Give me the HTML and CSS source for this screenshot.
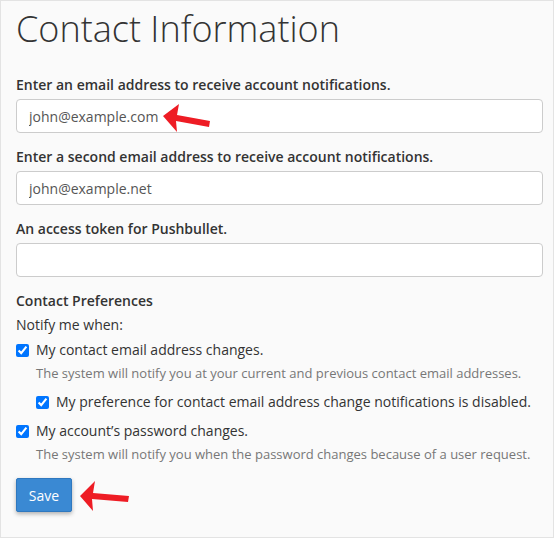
FILE: index.html
```html
<!DOCTYPE html>
<html>
<head>
<meta charset="utf-8">
<link rel="stylesheet" href="styles.css">
</head>
<body>
<div class="page">
  <h1 class="title">Contact Information</h1>
  <form class="form">
    <div class="group">
      <label class="label">Enter an email address to receive account notifications.</label>
      <div class="field-wrap">
        <input class="input" type="text" value="john@example.com">
        <svg class="arrow arrow-input" width="52" height="32" viewBox="0 0 52 32"><polygon points="2,13 18,1 16,12 49,18 48,24 15,18 16,29" fill="#ee1c24"/></svg>
      </div>
    </div>
    <div class="group">
      <label class="label">Enter a second email address to receive account notifications.</label>
      <input class="input" type="text" value="john@example.net">
    </div>
    <div class="group">
      <label class="label">An access token for Pushbullet.</label>
      <input class="input" type="text" value="">
    </div>
    <div class="prefs">
      <div class="label prefs-title">Contact Preferences</div>
      <div class="notify">Notify me when:</div>
      <label class="check"><input type="checkbox" checked><span>My contact email address changes.</span></label>
      <div class="help">The system will notify you at your current and previous contact email addresses.</div>
      <label class="check nested"><input type="checkbox" checked><span>My preference for contact email address change notifications is disabled.</span></label>
      <label class="check"><input type="checkbox" checked><span>My account’s password changes.</span></label>
      <div class="help">The system will notify you when the password changes because of a user request.</div>
    </div>
    <div class="actions">
      <button class="btn" type="button">Save</button>
      <svg class="arrow arrow-btn" width="54" height="36" viewBox="0 0 54 36"><polygon points="2,17 17,2 15,14 51,17 50,23 14,20 15,32" fill="#ee1c24"/></svg>
    </div>
  </form>
</div>
</body>
</html>
```
FILE: styles.css
```css
* { box-sizing: border-box; }
html, body { margin: 0; padding: 0; }
body {
  font-family: "Open Sans", "DejaVu Sans", sans-serif;
  color: #333;
  background: #fff;
}
.page {
  width: 554px;
  height: 538px;
  border: 1px solid #e3e3e3;
  background: #fafafa;
  padding: 0 10px 0 15px;
}
.title {
  font-weight: 300;
  font-size: 36px;
  line-height: 40px;
  margin: 8px 0 0 0;
  color: #333;
}
.form { margin-top: 26px; }
.group { margin-bottom: 14px; }
.label {
  display: block;
  font-weight: 600;
  font-size: 14px;
  line-height: 20px;
  margin-bottom: 4px;
}
.field-wrap { position: relative; }
.input {
  display: block;
  width: 100%;
  height: 34px;
  border: 1px solid #ccc;
  border-radius: 4px;
  background: #fff;
  padding: 6px 12px;
  font-family: "Open Sans", sans-serif;
  font-size: 14px;
  color: #555;
}
.arrow { position: absolute; }
.arrow-input { left: 145px; top: 4px; }
.prefs { margin-top: 0; }
.prefs-title { margin-bottom: 4px; }
.notify { font-size: 14px; line-height: 20px; margin-bottom: 5px; }
.check {
  display: flex;
  align-items: center;
  gap: 7px;
  font-size: 14px;
  line-height: 20px;
}
.check input {
  margin: 0;
  width: 13px;
  height: 13px;
  accent-color: #0075ff;
}
.check.nested { margin-left: 20px; margin-top: 10px; margin-bottom: 9px; }
.help {
  font-size: 13px;
  line-height: 18px;
  color: #777;
  margin: 4px 0 0 20px;
}
.actions { position: relative; margin-top: 15px; }
.btn {
  width: 56px;
  height: 34px;
  border: 1px solid #2f78bf;
  border-radius: 2px;
  background: #3a89d3;
  color: #fff;
  font-family: "Open Sans", sans-serif;
  font-size: 14px;
  box-shadow: 0 2px 4px rgba(0,0,0,0.3);
  padding: 0;
}
.arrow-btn { left: 62px; top: 1px; }
```
